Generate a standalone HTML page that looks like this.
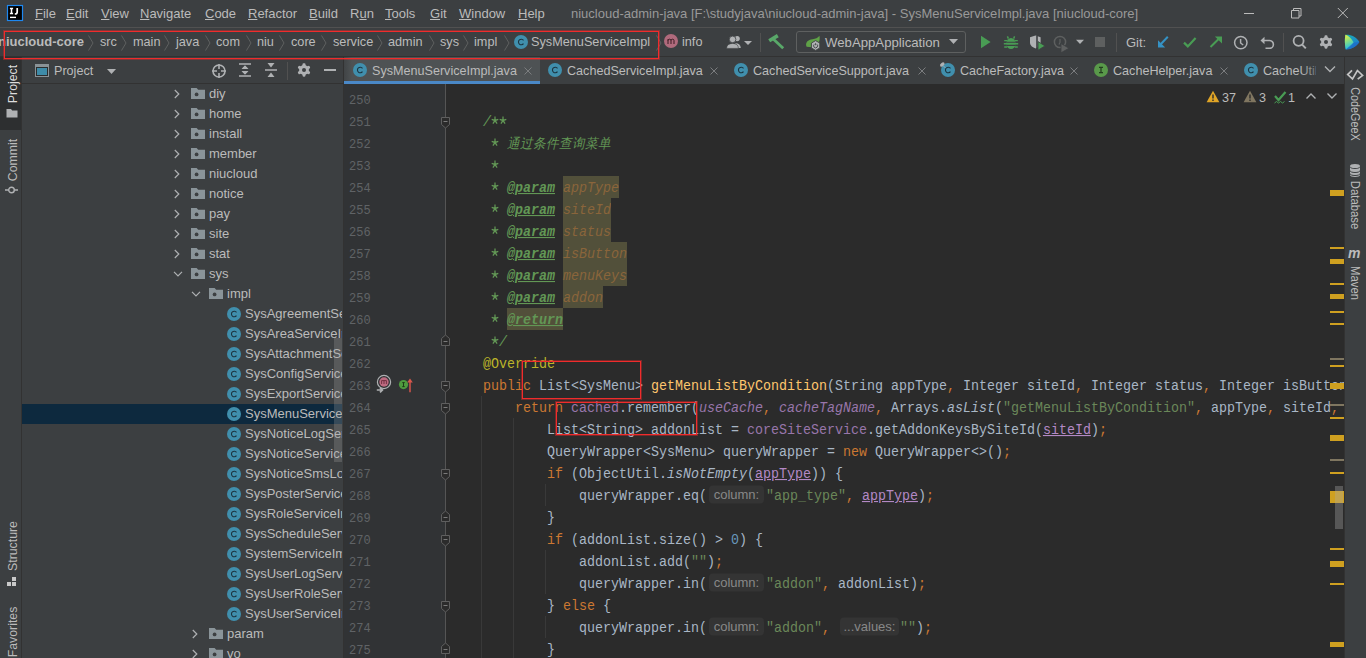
<!DOCTYPE html>
<html><head><meta charset="utf-8"><style>
html,body{margin:0;padding:0}
body{width:1366px;height:658px;overflow:hidden;position:relative;background:#3C3F41;font-family:"Liberation Sans",sans-serif}
.t{position:absolute;white-space:pre;line-height:18px;font-family:"Liberation Sans",sans-serif}
.menu{font-size:13px;color:#BBBBBB}
.menu u{text-decoration:underline;text-underline-offset:1px}
.r{position:absolute;box-sizing:border-box}
.s{position:absolute;overflow:visible}
.ln{position:absolute;left:349px;width:24px;font:12px/22px "Liberation Mono",monospace;color:#606366}
.cl{position:absolute;left:5px;white-space:pre;font:13.3333px/22px "Liberation Mono",monospace;color:#A9B7C6;transform:scaleY(1.1);transform-origin:0 5px}
.hint{transform:scaleY(0.909);transform-origin:50% 50%;display:inline-block;box-sizing:border-box;height:18px;vertical-align:0px;background:#343434;border-radius:4px;color:#888888;font:13px/19px "Liberation Sans",sans-serif;text-align:center;padding:0}
</style></head><body>
<div class="r" style="left:0px;top:0px;width:1366px;height:27px;background:#3C3F41;"></div>
<div class="r" style="left:0px;top:27px;width:1366px;height:1px;background:#515151;"></div>
<svg class="s" style="left:7px;top:5px;" width="16" height="16" viewBox="0 0 16 16"><rect x="0.5" y="0.5" width="15" height="15" fill="#000" stroke="#1E88F0" stroke-width="1.2"/><path d="M2.9 3.6h3.2M4.5 3.6v5M2.9 8.6h3.2" stroke="#fff" stroke-width="1.5" fill="none"/><path d="M10.2 3v3.9q0 2.1-2.4 2.1" stroke="#fff" stroke-width="1.7" fill="none"/><rect x="3" y="11.7" width="6" height="1.4" fill="#fff"/></svg>
<div class="t menu" style="left:35px;top:5px"><u>F</u>ile</div>
<div class="t menu" style="left:66px;top:5px"><u>E</u>dit</div>
<div class="t menu" style="left:101px;top:5px"><u>V</u>iew</div>
<div class="t menu" style="left:140px;top:5px"><u>N</u>avigate</div>
<div class="t menu" style="left:205px;top:5px"><u>C</u>ode</div>
<div class="t menu" style="left:248px;top:5px"><u>R</u>efactor</div>
<div class="t menu" style="left:309px;top:5px"><u>B</u>uild</div>
<div class="t menu" style="left:350px;top:5px">R<u>u</u>n</div>
<div class="t menu" style="left:385px;top:5px"><u>T</u>ools</div>
<div class="t menu" style="left:430px;top:5px"><u>G</u>it</div>
<div class="t menu" style="left:459px;top:5px"><u>W</u>indow</div>
<div class="t menu" style="left:518px;top:5px"><u>H</u>elp</div>
<div class="t" style="left:571px;top:5px;font-size:13px;color:#999999;font-weight:normal;">niucloud-admin-java [F:\studyjava\niucloud-admin-java] - SysMenuServiceImpl.java [niucloud-core]</div>
<svg class="s" style="left:1240px;top:6px;" width="20" height="14" viewBox="0 0 20 14"><path d="M4 7.5h10" stroke="#BBBBBB" stroke-width="1"/></svg>
<svg class="s" style="left:1288px;top:5px;" width="18" height="16" viewBox="0 0 18 16"><path d="M3.5 5.5h7.5v7.5h-7.5z M5.5 5.5v-2h7.5v7.5h-2" stroke="#BBBBBB" stroke-width="1" fill="none"/></svg>
<svg class="s" style="left:1334px;top:5px;" width="18" height="16" viewBox="0 0 18 16"><path d="M3.8 3l10 10M13.8 3l-10 10" stroke="#BBBBBB" stroke-width="1" fill="none"/></svg>
<div class="r" style="left:0px;top:28px;width:1366px;height:28px;background:#3C3F41;"></div>
<div class="r" style="left:0px;top:56px;width:1366px;height:1px;background:#323232;"></div>
<div class="t" style="left:-2px;top:33px;font-size:13px;font-weight:bold;color:#BBBBBB">niucloud-core</div>
<svg class="s" style="left:87px;top:34px;" width="8" height="18" viewBox="0 0 8 18"><path d="M1.5 1.5l4.5 7.5-4.5 7.5" stroke="#5E6060" stroke-width="1" fill="none"/></svg>
<div class="t" style="left:100px;top:33px;font-size:12.7px;color:#BBBBBB;font-weight:normal;">src</div>
<div class="t" style="left:133px;top:33px;font-size:12.7px;color:#BBBBBB;font-weight:normal;">main</div>
<div class="t" style="left:176px;top:33px;font-size:12.7px;color:#BBBBBB;font-weight:normal;">java</div>
<div class="t" style="left:216px;top:33px;font-size:12.7px;color:#BBBBBB;font-weight:normal;">com</div>
<div class="t" style="left:257px;top:33px;font-size:12.7px;color:#BBBBBB;font-weight:normal;">niu</div>
<div class="t" style="left:291px;top:33px;font-size:12.7px;color:#BBBBBB;font-weight:normal;">core</div>
<div class="t" style="left:333px;top:33px;font-size:12.7px;color:#BBBBBB;font-weight:normal;">service</div>
<div class="t" style="left:388px;top:33px;font-size:12.7px;color:#BBBBBB;font-weight:normal;">admin</div>
<div class="t" style="left:440px;top:33px;font-size:12.7px;color:#BBBBBB;font-weight:normal;">sys</div>
<div class="t" style="left:474px;top:33px;font-size:12.7px;color:#BBBBBB;font-weight:normal;">impl</div>
<svg class="s" style="left:120px;top:34px;" width="8" height="18" viewBox="0 0 8 18"><path d="M1.5 1.5l4.5 7.5-4.5 7.5" stroke="#5E6060" stroke-width="1" fill="none"/></svg>
<svg class="s" style="left:163px;top:34px;" width="8" height="18" viewBox="0 0 8 18"><path d="M1.5 1.5l4.5 7.5-4.5 7.5" stroke="#5E6060" stroke-width="1" fill="none"/></svg>
<svg class="s" style="left:204px;top:34px;" width="8" height="18" viewBox="0 0 8 18"><path d="M1.5 1.5l4.5 7.5-4.5 7.5" stroke="#5E6060" stroke-width="1" fill="none"/></svg>
<svg class="s" style="left:245px;top:34px;" width="8" height="18" viewBox="0 0 8 18"><path d="M1.5 1.5l4.5 7.5-4.5 7.5" stroke="#5E6060" stroke-width="1" fill="none"/></svg>
<svg class="s" style="left:278px;top:34px;" width="8" height="18" viewBox="0 0 8 18"><path d="M1.5 1.5l4.5 7.5-4.5 7.5" stroke="#5E6060" stroke-width="1" fill="none"/></svg>
<svg class="s" style="left:320px;top:34px;" width="8" height="18" viewBox="0 0 8 18"><path d="M1.5 1.5l4.5 7.5-4.5 7.5" stroke="#5E6060" stroke-width="1" fill="none"/></svg>
<svg class="s" style="left:376px;top:34px;" width="8" height="18" viewBox="0 0 8 18"><path d="M1.5 1.5l4.5 7.5-4.5 7.5" stroke="#5E6060" stroke-width="1" fill="none"/></svg>
<svg class="s" style="left:428px;top:34px;" width="8" height="18" viewBox="0 0 8 18"><path d="M1.5 1.5l4.5 7.5-4.5 7.5" stroke="#5E6060" stroke-width="1" fill="none"/></svg>
<svg class="s" style="left:462px;top:34px;" width="8" height="18" viewBox="0 0 8 18"><path d="M1.5 1.5l4.5 7.5-4.5 7.5" stroke="#5E6060" stroke-width="1" fill="none"/></svg>
<svg class="s" style="left:503px;top:34px;" width="8" height="18" viewBox="0 0 8 18"><path d="M1.5 1.5l4.5 7.5-4.5 7.5" stroke="#5E6060" stroke-width="1" fill="none"/></svg>
<svg class="s" style="left:655px;top:34px;" width="8" height="18" viewBox="0 0 8 18"><path d="M1.5 1.5l4.5 7.5-4.5 7.5" stroke="#5E6060" stroke-width="1" fill="none"/></svg>
<svg class="s" style="left:514px;top:35px;" width="14" height="14" viewBox="0 0 14 14"><circle cx="7" cy="7" r="7" fill="#408FAD"/><path d="M9.5 5.3A2.8 2.8 0 1 0 9.5 8.7" stroke="#1C3440" stroke-width="1.1" fill="none"/></svg>
<div class="t" style="left:531px;top:33px;font-size:12.7px;color:#BBBBBB;font-weight:normal;">SysMenuServiceImpl</div>
<svg class="s" style="left:664px;top:34px;" width="14" height="14" viewBox="0 0 14 14"><circle cx="7" cy="7" r="7" fill="#B06A7C"/><path d="M4 10V5.2M4 6.6q0-1.4 1.5-1.4t1.5 1.4V10M7 6.6q0-1.4 1.5-1.4t1.5 1.4V10" stroke="#3A1A22" stroke-width="1" fill="none"/></svg>
<div class="t" style="left:682px;top:33px;font-size:12.7px;color:#BBBBBB;font-weight:normal;">info</div>
<svg class="s" style="left:724px;top:34px;" width="30" height="16" viewBox="0 0 30 16"><circle cx="13.2" cy="4.6" r="2.6" fill="#AFB1B3"/><path d="M11 9.2Q16.6 9 16.8 14H13z" fill="#AFB1B3"/><circle cx="8.6" cy="5.4" r="3.3" fill="#AFB1B3" stroke="#3C3F41" stroke-width="0.8"/><path d="M2.6 14.4Q2.6 9.6 8.6 9.4Q14.4 9.6 14.4 14.4z" fill="#AFB1B3" stroke="#3C3F41" stroke-width="0.6"/><path d="M20 7h8l-4 4z" fill="#AFB1B3"/></svg>
<div class="r" style="left:760px;top:33px;width:1px;height:19px;background:#515151;"></div>
<svg class="s" style="left:767px;top:33px;" width="20" height="18" viewBox="0 0 20 18"><path d="M2.2 7.8L10.8 2.6" stroke="#59A869" stroke-width="3.6" fill="none"/><path d="M6.5 6.2L16.2 15.2" stroke="#59A869" stroke-width="2.8" fill="none"/></svg>
<div class="r" style="left:796px;top:31px;width:170px;height:22px;border:1px solid #5E6060;border-radius:3px;background:#3C3F41"></div>
<svg class="s" style="left:803px;top:34px;" width="20" height="18" viewBox="0 0 20 18"><path d="M3.6 12.8C1.8 8.6 5 5.6 9.6 5.2C12.6 4.9 14.6 4 16.4 1.8C17.6 6.6 15.6 11.8 9.4 13.2z" fill="#5FA247"/><path d="M12.6 6.6l4.2 2.45v4.9l-4.2 2.45-4.2-2.45v-4.9z" fill="#AFB1B3" stroke="#3C3F41" stroke-width="0.9"/><path d="M11.2 10.4a2 2 0 1 0 2.8 0M12.6 9.2v2" stroke="#3C3F41" stroke-width="0.9" fill="none"/></svg>
<div class="t" style="left:825px;top:34px;font-size:13.2px;color:#BBBBBB;font-weight:normal;">WebAppApplication</div>
<svg class="s" style="left:947px;top:37px;" width="14" height="10" viewBox="0 0 14 10"><path d="M2 2h9l-4.5 5z" fill="#AFB1B3"/></svg>
<svg class="s" style="left:979px;top:34px;" width="14" height="16" viewBox="0 0 14 16"><path d="M2 1.8l9.6 6.2-9.6 6.2z" fill="#499C54"/></svg>
<svg class="s" style="left:1003px;top:33px;" width="16" height="18" viewBox="0 0 16 18"><ellipse cx="8" cy="10.5" rx="4.6" ry="5.6" fill="#499C54"/><path d="M5.4 5.6L4.4 3.4M10.6 5.6l1-2.2M1.2 7.6h3M11.8 7.6h3M0.8 10.8h3.4M11.8 10.8h3.4M1.2 14h3M11.8 14h3" stroke="#499C54" stroke-width="1.4"/><path d="M3.5 9.2h9M3.5 12.4h9" stroke="#3C3F41" stroke-width="1.1"/></svg>
<svg class="s" style="left:1028px;top:33px;" width="18" height="18" viewBox="0 0 18 18"><path d="M2 4.2L7.5 2.6 12.6 4.2V9.5C12.6 12.8 10 14.6 7.5 15.4 5 14.6 2 12.8 2 9.5z" fill="#AFB1B3"/><path d="M9 3v13" stroke="#3C3F41" stroke-width="1.6"/><path d="M10 8.6l7 4.3-7 4.3z" fill="#499C54" stroke="#3C3F41" stroke-width="0.8"/></svg>
<svg class="s" style="left:1052px;top:33px;" width="18" height="18" viewBox="0 0 18 18"><circle cx="8" cy="9" r="5.6" fill="none" stroke="#5E6060" stroke-width="1.5"/><path d="M8 6v3.4l-1 2" stroke="#5E6060" stroke-width="1.2" fill="none"/><path d="M9 10.6l8 4.6-8 4.6z" fill="#5E6060" stroke="#3C3F41" stroke-width="0.8"/></svg>
<svg class="s" style="left:1075px;top:38px;" width="10" height="8" viewBox="0 0 10 8"><path d="M1 1.8h8l-4 4.2z" fill="#AFB1B3"/></svg>
<div class="r" style="left:1095px;top:37px;width:10px;height:10px;background:#5E6060;"></div>
<div class="r" style="left:1116px;top:33px;width:1px;height:19px;background:#515151;"></div>
<div class="t" style="left:1126px;top:34px;font-size:13px;color:#BBBBBB;font-weight:normal;">Git:</div>
<svg class="s" style="left:1156px;top:34px;" width="16" height="16" viewBox="0 0 16 16"><path d="M11.8 2.8L3.5 11.5" stroke="#3592C4" stroke-width="2" fill="none"/><path d="M2 6.2v7.2h7.2z" fill="#3592C4"/></svg>
<svg class="s" style="left:1182px;top:34px;" width="16" height="16" viewBox="0 0 16 16"><path d="M2 8.6l3.8 3.8 7.8-8.4" stroke="#499C54" stroke-width="2.2" fill="none"/></svg>
<svg class="s" style="left:1208px;top:34px;" width="16" height="16" viewBox="0 0 16 16"><path d="M2.5 13L11.6 4" stroke="#499C54" stroke-width="2" fill="none"/><path d="M14 2.5V9.6L6.9 2.5z" fill="#499C54"/></svg>
<svg class="s" style="left:1232px;top:34px;" width="18" height="18" viewBox="0 0 18 18"><circle cx="8.8" cy="8.6" r="6.2" fill="none" stroke="#AFB1B3" stroke-width="1.5"/><path d="M8.6 5v4l2.6 2" stroke="#AFB1B3" stroke-width="1.5" fill="none"/></svg>
<svg class="s" style="left:1259px;top:34px;" width="18" height="18" viewBox="0 0 18 18"><path d="M5 6.5h5.5a3.9 3.9 0 0 1 0 7.8H6.5" stroke="#AFB1B3" stroke-width="1.6" fill="none"/><path d="M1.5 6.5l4-3.8v7.6z" fill="#AFB1B3"/></svg>
<div class="r" style="left:1283px;top:33px;width:1px;height:19px;background:#515151;"></div>
<svg class="s" style="left:1290px;top:33px;" width="18" height="18" viewBox="0 0 18 18"><circle cx="8.6" cy="7.8" r="5" fill="none" stroke="#AFB1B3" stroke-width="1.8"/><path d="M12.2 11.6l3.6 3.8" stroke="#AFB1B3" stroke-width="2" fill="none"/></svg>
<svg class="s" style="left:1319px;top:35px;" width="14" height="14" viewBox="0 0 14 14"><g transform="scale(0.875)"><rect x="6.3" y="0.4" width="3.4" height="4" rx="1.2" fill="#AFB1B3" transform="rotate(0 8 8)"/><rect x="6.3" y="0.4" width="3.4" height="4" rx="1.2" fill="#AFB1B3" transform="rotate(60 8 8)"/><rect x="6.3" y="0.4" width="3.4" height="4" rx="1.2" fill="#AFB1B3" transform="rotate(120 8 8)"/><rect x="6.3" y="0.4" width="3.4" height="4" rx="1.2" fill="#AFB1B3" transform="rotate(180 8 8)"/><rect x="6.3" y="0.4" width="3.4" height="4" rx="1.2" fill="#AFB1B3" transform="rotate(240 8 8)"/><rect x="6.3" y="0.4" width="3.4" height="4" rx="1.2" fill="#AFB1B3" transform="rotate(300 8 8)"/><circle cx="8" cy="8" r="5.6" fill="#AFB1B3"/><circle cx="8" cy="8" r="2.3" fill="#3C3F41"/></g></svg>
<svg class="s" style="left:1343px;top:33px;" width="20" height="18" viewBox="0 0 20 18"><defs><linearGradient id="cg1" x1="0" y1="0" x2="0.3" y2="1"><stop offset="0" stop-color="#F2F03A"/><stop offset=".45" stop-color="#8FE07A"/><stop offset="1" stop-color="#1FC0E8"/></linearGradient><linearGradient id="cg2" x1="0" y1="0" x2="1" y2="1"><stop offset="0" stop-color="#19B5B0"/><stop offset="1" stop-color="#1E6FD6"/></linearGradient></defs><path d="M2.4 1.8C8 1.4 13 3.8 16.4 9C13 14 8 16.6 2.8 16.4C1.6 11.6 1.6 6.4 2.4 1.8z" fill="url(#cg2)"/><path d="M2.4 1.8C5.6 2.6 8.6 5.4 10.6 9.6C8.6 12.6 5.6 15 2.8 16.4C1.6 11.6 1.6 6.4 2.4 1.8z" fill="url(#cg1)"/><path d="M10.6 9.6L16.4 9C13 14 8 16.6 2.8 16.4z" fill="#1F63C8" opacity=".55"/></svg>
<div class="r" style="left:0px;top:57px;width:21px;height:601px;background:#3C3F41;"></div>
<div class="r" style="left:21px;top:57px;width:1px;height:601px;background:#323232;"></div>
<div class="r" style="left:0px;top:57px;width:21px;height:73px;background:#2D2F30;"></div>
<div class="t" style="left:12.5px;top:84px;font-size:12.3px;color:#DDDDDD;transform:translate(-50%,-50%) rotate(-90deg) scaleX(1);transform-origin:center">Project</div>
<svg class="s" style="left:6px;top:108px;" width="12" height="10" viewBox="0 0 12 10"><path d="M0.5 1h4.5l1.2 1.5H11.5V9.5H0.5z" fill="#AFB1B3"/></svg>
<div class="t" style="left:12.5px;top:160px;font-size:12.3px;color:#BBBBBB;transform:translate(-50%,-50%) rotate(-90deg) scaleX(1);transform-origin:center">Commit</div>
<svg class="s" style="left:5px;top:184px;" width="13" height="12" viewBox="0 0 13 12"><circle cx="6.5" cy="6" r="2.8" fill="none" stroke="#AFB1B3" stroke-width="1.4"/><path d="M0 6h3.7M9.3 6H13" stroke="#AFB1B3" stroke-width="1.4"/></svg>
<div class="t" style="left:13px;top:546px;font-size:12.3px;color:#BBBBBB;transform:translate(-50%,-50%) rotate(-90deg) scaleX(1);transform-origin:center">Structure</div>
<svg class="s" style="left:7px;top:577px;" width="9" height="9" viewBox="0 0 9 9"><rect x="0" y="5" width="4" height="4" fill="#C9C9C9"/><rect x="5" y="0" width="4" height="4" fill="#C9C9C9"/><rect x="5" y="5" width="4" height="4" fill="#C9C9C9"/></svg>
<div class="t" style="left:13px;top:632px;font-size:12.3px;color:#BBBBBB;transform:translate(-50%,-50%) rotate(-90deg) scaleX(1);transform-origin:center">Favorites</div>
<div class="r" style="left:22px;top:57px;width:321px;height:601px;background:#3C3F41;"></div>
<div class="r" style="left:22px;top:83px;width:321px;height:1px;background:#323232;"></div>
<div class="r" style="left:343px;top:57px;width:1px;height:601px;background:#323232;"></div>
<svg class="s" style="left:35px;top:64px;" width="14" height="13" viewBox="0 0 14 13"><rect x="0" y="0" width="14" height="13" fill="#8A9296"/><rect x="1" y="3" width="12" height="9" fill="#2B2D2E"/><rect x="2" y="4" width="10" height="7" fill="#3E8BA8"/></svg>
<div class="t" style="left:54px;top:62px;font-size:12.6px;color:#BBBBBB;font-weight:normal;">Project</div>
<svg class="s" style="left:106px;top:67px;" width="11" height="8" viewBox="0 0 11 8"><path d="M1 2h9l-4.5 5z" fill="#AFB1B3"/></svg>
<svg class="s" style="left:211px;top:63px;" width="16" height="16" viewBox="0 0 16 16"><circle cx="8" cy="8" r="6" fill="none" stroke="#AFB1B3" stroke-width="1.6"/><path d="M8 1v5M8 10v5M1 8h5M10 8h5" stroke="#AFB1B3" stroke-width="1.6"/></svg>
<svg class="s" style="left:238px;top:62px;" width="14" height="16" viewBox="0 0 14 16"><path d="M1 2h12M1 14h12" stroke="#AFB1B3" stroke-width="1.5"/><path d="M4 6.5l3-3 3 3M4 9.5l3 3 3-3" fill="#AFB1B3"/><path d="M3.5 7h7l-3.5-3.5zM3.5 9h7l-3.5 3.5z" fill="#AFB1B3"/></svg>
<svg class="s" style="left:264px;top:62px;" width="14" height="16" viewBox="0 0 14 16"><path d="M1 8h12" stroke="#AFB1B3" stroke-width="1.5"/><path d="M3.5 1h7l-3.5 4.5zM3.5 15h7l-3.5-4.5z" fill="#AFB1B3"/></svg>
<div class="r" style="left:287px;top:62px;width:1px;height:18px;background:#515151;"></div>
<svg class="s" style="left:297px;top:63px;" width="14" height="14" viewBox="0 0 14 14"><g transform="scale(0.875)"><rect x="6.3" y="0.4" width="3.4" height="4" rx="1.2" fill="#AFB1B3" transform="rotate(0 8 8)"/><rect x="6.3" y="0.4" width="3.4" height="4" rx="1.2" fill="#AFB1B3" transform="rotate(60 8 8)"/><rect x="6.3" y="0.4" width="3.4" height="4" rx="1.2" fill="#AFB1B3" transform="rotate(120 8 8)"/><rect x="6.3" y="0.4" width="3.4" height="4" rx="1.2" fill="#AFB1B3" transform="rotate(180 8 8)"/><rect x="6.3" y="0.4" width="3.4" height="4" rx="1.2" fill="#AFB1B3" transform="rotate(240 8 8)"/><rect x="6.3" y="0.4" width="3.4" height="4" rx="1.2" fill="#AFB1B3" transform="rotate(300 8 8)"/><circle cx="8" cy="8" r="5.6" fill="#AFB1B3"/><circle cx="8" cy="8" r="2.3" fill="#3C3F41"/></g></svg>
<div class="r" style="left:324px;top:69px;width:12px;height:2px;background:#AFB1B3;"></div>
<div class="r" style="left:22px;top:404px;width:320px;height:20px;background:#0D293E;"></div>
<svg class="s" style="left:173px;top:89px;" width="8" height="10" viewBox="0 0 8 10"><path d="M1.8 1l4 4-4 4" stroke="#AFB1B3" stroke-width="1.2" fill="none"/></svg>
<svg class="s" style="left:191px;top:88px;" width="14" height="12" viewBox="0 0 14 12"><path d="M0 0h5.6l1.6 1.8H14V11H0z" fill="#8A9499"/><circle cx="5.6" cy="6.4" r="1.9" fill="#3C3F41"/></svg>
<div class="t" style="left:209px;top:85px;font-size:13px;color:#BBBBBB;font-weight:normal;">diy</div>
<svg class="s" style="left:173px;top:109px;" width="8" height="10" viewBox="0 0 8 10"><path d="M1.8 1l4 4-4 4" stroke="#AFB1B3" stroke-width="1.2" fill="none"/></svg>
<svg class="s" style="left:191px;top:108px;" width="14" height="12" viewBox="0 0 14 12"><path d="M0 0h5.6l1.6 1.8H14V11H0z" fill="#8A9499"/><circle cx="5.6" cy="6.4" r="1.9" fill="#3C3F41"/></svg>
<div class="t" style="left:209px;top:105px;font-size:13px;color:#BBBBBB;font-weight:normal;">home</div>
<svg class="s" style="left:173px;top:129px;" width="8" height="10" viewBox="0 0 8 10"><path d="M1.8 1l4 4-4 4" stroke="#AFB1B3" stroke-width="1.2" fill="none"/></svg>
<svg class="s" style="left:191px;top:128px;" width="14" height="12" viewBox="0 0 14 12"><path d="M0 0h5.6l1.6 1.8H14V11H0z" fill="#8A9499"/><circle cx="5.6" cy="6.4" r="1.9" fill="#3C3F41"/></svg>
<div class="t" style="left:209px;top:125px;font-size:13px;color:#BBBBBB;font-weight:normal;">install</div>
<svg class="s" style="left:173px;top:149px;" width="8" height="10" viewBox="0 0 8 10"><path d="M1.8 1l4 4-4 4" stroke="#AFB1B3" stroke-width="1.2" fill="none"/></svg>
<svg class="s" style="left:191px;top:148px;" width="14" height="12" viewBox="0 0 14 12"><path d="M0 0h5.6l1.6 1.8H14V11H0z" fill="#8A9499"/><circle cx="5.6" cy="6.4" r="1.9" fill="#3C3F41"/></svg>
<div class="t" style="left:209px;top:145px;font-size:13px;color:#BBBBBB;font-weight:normal;">member</div>
<svg class="s" style="left:173px;top:169px;" width="8" height="10" viewBox="0 0 8 10"><path d="M1.8 1l4 4-4 4" stroke="#AFB1B3" stroke-width="1.2" fill="none"/></svg>
<svg class="s" style="left:191px;top:168px;" width="14" height="12" viewBox="0 0 14 12"><path d="M0 0h5.6l1.6 1.8H14V11H0z" fill="#8A9499"/><circle cx="5.6" cy="6.4" r="1.9" fill="#3C3F41"/></svg>
<div class="t" style="left:209px;top:165px;font-size:13px;color:#BBBBBB;font-weight:normal;">niucloud</div>
<svg class="s" style="left:173px;top:189px;" width="8" height="10" viewBox="0 0 8 10"><path d="M1.8 1l4 4-4 4" stroke="#AFB1B3" stroke-width="1.2" fill="none"/></svg>
<svg class="s" style="left:191px;top:188px;" width="14" height="12" viewBox="0 0 14 12"><path d="M0 0h5.6l1.6 1.8H14V11H0z" fill="#8A9499"/><circle cx="5.6" cy="6.4" r="1.9" fill="#3C3F41"/></svg>
<div class="t" style="left:209px;top:185px;font-size:13px;color:#BBBBBB;font-weight:normal;">notice</div>
<svg class="s" style="left:173px;top:209px;" width="8" height="10" viewBox="0 0 8 10"><path d="M1.8 1l4 4-4 4" stroke="#AFB1B3" stroke-width="1.2" fill="none"/></svg>
<svg class="s" style="left:191px;top:208px;" width="14" height="12" viewBox="0 0 14 12"><path d="M0 0h5.6l1.6 1.8H14V11H0z" fill="#8A9499"/><circle cx="5.6" cy="6.4" r="1.9" fill="#3C3F41"/></svg>
<div class="t" style="left:209px;top:205px;font-size:13px;color:#BBBBBB;font-weight:normal;">pay</div>
<svg class="s" style="left:173px;top:229px;" width="8" height="10" viewBox="0 0 8 10"><path d="M1.8 1l4 4-4 4" stroke="#AFB1B3" stroke-width="1.2" fill="none"/></svg>
<svg class="s" style="left:191px;top:228px;" width="14" height="12" viewBox="0 0 14 12"><path d="M0 0h5.6l1.6 1.8H14V11H0z" fill="#8A9499"/><circle cx="5.6" cy="6.4" r="1.9" fill="#3C3F41"/></svg>
<div class="t" style="left:209px;top:225px;font-size:13px;color:#BBBBBB;font-weight:normal;">site</div>
<svg class="s" style="left:173px;top:249px;" width="8" height="10" viewBox="0 0 8 10"><path d="M1.8 1l4 4-4 4" stroke="#AFB1B3" stroke-width="1.2" fill="none"/></svg>
<svg class="s" style="left:191px;top:248px;" width="14" height="12" viewBox="0 0 14 12"><path d="M0 0h5.6l1.6 1.8H14V11H0z" fill="#8A9499"/><circle cx="5.6" cy="6.4" r="1.9" fill="#3C3F41"/></svg>
<div class="t" style="left:209px;top:245px;font-size:13px;color:#BBBBBB;font-weight:normal;">stat</div>
<svg class="s" style="left:173px;top:270px;" width="10" height="8" viewBox="0 0 10 8"><path d="M1 1.8l4 4 4-4" stroke="#AFB1B3" stroke-width="1.2" fill="none"/></svg>
<svg class="s" style="left:191px;top:268px;" width="14" height="12" viewBox="0 0 14 12"><path d="M0 0h5.6l1.6 1.8H14V11H0z" fill="#8A9499"/><circle cx="5.6" cy="6.4" r="1.9" fill="#3C3F41"/></svg>
<div class="t" style="left:209px;top:265px;font-size:13px;color:#BBBBBB;font-weight:normal;">sys</div>
<svg class="s" style="left:191px;top:290px;" width="10" height="8" viewBox="0 0 10 8"><path d="M1 1.8l4 4 4-4" stroke="#AFB1B3" stroke-width="1.2" fill="none"/></svg>
<svg class="s" style="left:209px;top:288px;" width="14" height="12" viewBox="0 0 14 12"><path d="M0 0h5.6l1.6 1.8H14V11H0z" fill="#8A9499"/><circle cx="5.6" cy="6.4" r="1.9" fill="#3C3F41"/></svg>
<div class="t" style="left:227px;top:285px;font-size:13px;color:#BBBBBB;font-weight:normal;">impl</div>
<div style="position:absolute;left:0;top:0;width:342px;height:658px;overflow:hidden">
<svg class="s" style="left:227px;top:307px;" width="14" height="14" viewBox="0 0 14 14"><circle cx="7" cy="7" r="7" fill="#408FAD"/><path d="M9.5 5.3A2.8 2.8 0 1 0 9.5 8.7" stroke="#1C3440" stroke-width="1.1" fill="none"/></svg>
<div class="t" style="left:245px;top:305px;font-size:13px;color:#BBBBBB;font-weight:normal;">SysAgreementServiceImpl</div>
<svg class="s" style="left:227px;top:327px;" width="14" height="14" viewBox="0 0 14 14"><circle cx="7" cy="7" r="7" fill="#408FAD"/><path d="M9.5 5.3A2.8 2.8 0 1 0 9.5 8.7" stroke="#1C3440" stroke-width="1.1" fill="none"/></svg>
<div class="t" style="left:245px;top:325px;font-size:13px;color:#BBBBBB;font-weight:normal;">SysAreaServiceImpl</div>
<svg class="s" style="left:227px;top:347px;" width="14" height="14" viewBox="0 0 14 14"><circle cx="7" cy="7" r="7" fill="#408FAD"/><path d="M9.5 5.3A2.8 2.8 0 1 0 9.5 8.7" stroke="#1C3440" stroke-width="1.1" fill="none"/></svg>
<div class="t" style="left:245px;top:345px;font-size:13px;color:#BBBBBB;font-weight:normal;">SysAttachmentServiceImpl</div>
<svg class="s" style="left:227px;top:367px;" width="14" height="14" viewBox="0 0 14 14"><circle cx="7" cy="7" r="7" fill="#408FAD"/><path d="M9.5 5.3A2.8 2.8 0 1 0 9.5 8.7" stroke="#1C3440" stroke-width="1.1" fill="none"/></svg>
<div class="t" style="left:245px;top:365px;font-size:13px;color:#BBBBBB;font-weight:normal;">SysConfigServiceImpl</div>
<svg class="s" style="left:227px;top:387px;" width="14" height="14" viewBox="0 0 14 14"><circle cx="7" cy="7" r="7" fill="#408FAD"/><path d="M9.5 5.3A2.8 2.8 0 1 0 9.5 8.7" stroke="#1C3440" stroke-width="1.1" fill="none"/></svg>
<div class="t" style="left:245px;top:385px;font-size:13px;color:#BBBBBB;font-weight:normal;">SysExportServiceImpl</div>
<svg class="s" style="left:227px;top:407px;" width="14" height="14" viewBox="0 0 14 14"><circle cx="7" cy="7" r="7" fill="#408FAD"/><path d="M9.5 5.3A2.8 2.8 0 1 0 9.5 8.7" stroke="#1C3440" stroke-width="1.1" fill="none"/></svg>
<div class="t" style="left:245px;top:405px;font-size:13px;color:#BBBBBB;font-weight:normal;">SysMenuServiceImpl</div>
<svg class="s" style="left:227px;top:427px;" width="14" height="14" viewBox="0 0 14 14"><circle cx="7" cy="7" r="7" fill="#408FAD"/><path d="M9.5 5.3A2.8 2.8 0 1 0 9.5 8.7" stroke="#1C3440" stroke-width="1.1" fill="none"/></svg>
<div class="t" style="left:245px;top:425px;font-size:13px;color:#BBBBBB;font-weight:normal;">SysNoticeLogServiceImpl</div>
<svg class="s" style="left:227px;top:447px;" width="14" height="14" viewBox="0 0 14 14"><circle cx="7" cy="7" r="7" fill="#408FAD"/><path d="M9.5 5.3A2.8 2.8 0 1 0 9.5 8.7" stroke="#1C3440" stroke-width="1.1" fill="none"/></svg>
<div class="t" style="left:245px;top:445px;font-size:13px;color:#BBBBBB;font-weight:normal;">SysNoticeServiceImpl</div>
<svg class="s" style="left:227px;top:467px;" width="14" height="14" viewBox="0 0 14 14"><circle cx="7" cy="7" r="7" fill="#408FAD"/><path d="M9.5 5.3A2.8 2.8 0 1 0 9.5 8.7" stroke="#1C3440" stroke-width="1.1" fill="none"/></svg>
<div class="t" style="left:245px;top:465px;font-size:13px;color:#BBBBBB;font-weight:normal;">SysNoticeSmsLogServiceImpl</div>
<svg class="s" style="left:227px;top:487px;" width="14" height="14" viewBox="0 0 14 14"><circle cx="7" cy="7" r="7" fill="#408FAD"/><path d="M9.5 5.3A2.8 2.8 0 1 0 9.5 8.7" stroke="#1C3440" stroke-width="1.1" fill="none"/></svg>
<div class="t" style="left:245px;top:485px;font-size:13px;color:#BBBBBB;font-weight:normal;">SysPosterServiceImpl</div>
<svg class="s" style="left:227px;top:507px;" width="14" height="14" viewBox="0 0 14 14"><circle cx="7" cy="7" r="7" fill="#408FAD"/><path d="M9.5 5.3A2.8 2.8 0 1 0 9.5 8.7" stroke="#1C3440" stroke-width="1.1" fill="none"/></svg>
<div class="t" style="left:245px;top:505px;font-size:13px;color:#BBBBBB;font-weight:normal;">SysRoleServiceImpl</div>
<svg class="s" style="left:227px;top:527px;" width="14" height="14" viewBox="0 0 14 14"><circle cx="7" cy="7" r="7" fill="#408FAD"/><path d="M9.5 5.3A2.8 2.8 0 1 0 9.5 8.7" stroke="#1C3440" stroke-width="1.1" fill="none"/></svg>
<div class="t" style="left:245px;top:525px;font-size:13px;color:#BBBBBB;font-weight:normal;">SysScheduleServiceImpl</div>
<svg class="s" style="left:227px;top:547px;" width="14" height="14" viewBox="0 0 14 14"><circle cx="7" cy="7" r="7" fill="#408FAD"/><path d="M9.5 5.3A2.8 2.8 0 1 0 9.5 8.7" stroke="#1C3440" stroke-width="1.1" fill="none"/></svg>
<div class="t" style="left:245px;top:545px;font-size:13px;color:#BBBBBB;font-weight:normal;">SystemServiceImpl</div>
<svg class="s" style="left:227px;top:567px;" width="14" height="14" viewBox="0 0 14 14"><circle cx="7" cy="7" r="7" fill="#408FAD"/><path d="M9.5 5.3A2.8 2.8 0 1 0 9.5 8.7" stroke="#1C3440" stroke-width="1.1" fill="none"/></svg>
<div class="t" style="left:245px;top:565px;font-size:13px;color:#BBBBBB;font-weight:normal;">SysUserLogServiceImpl</div>
<svg class="s" style="left:227px;top:587px;" width="14" height="14" viewBox="0 0 14 14"><circle cx="7" cy="7" r="7" fill="#408FAD"/><path d="M9.5 5.3A2.8 2.8 0 1 0 9.5 8.7" stroke="#1C3440" stroke-width="1.1" fill="none"/></svg>
<div class="t" style="left:245px;top:585px;font-size:13px;color:#BBBBBB;font-weight:normal;">SysUserRoleServiceImpl</div>
<svg class="s" style="left:227px;top:607px;" width="14" height="14" viewBox="0 0 14 14"><circle cx="7" cy="7" r="7" fill="#408FAD"/><path d="M9.5 5.3A2.8 2.8 0 1 0 9.5 8.7" stroke="#1C3440" stroke-width="1.1" fill="none"/></svg>
<div class="t" style="left:245px;top:605px;font-size:13px;color:#BBBBBB;font-weight:normal;">SysUserServiceImpl</div>
</div>
<svg class="s" style="left:191px;top:629px;" width="8" height="10" viewBox="0 0 8 10"><path d="M1.8 1l4 4-4 4" stroke="#AFB1B3" stroke-width="1.2" fill="none"/></svg>
<svg class="s" style="left:209px;top:628px;" width="14" height="12" viewBox="0 0 14 12"><path d="M0 0h5.6l1.6 1.8H14V11H0z" fill="#8A9499"/><circle cx="5.6" cy="6.4" r="1.9" fill="#3C3F41"/></svg>
<div class="t" style="left:227px;top:625px;font-size:13px;color:#BBBBBB;font-weight:normal;">param</div>
<svg class="s" style="left:191px;top:649px;" width="8" height="10" viewBox="0 0 8 10"><path d="M1.8 1l4 4-4 4" stroke="#AFB1B3" stroke-width="1.2" fill="none"/></svg>
<svg class="s" style="left:209px;top:648px;" width="14" height="12" viewBox="0 0 14 12"><path d="M0 0h5.6l1.6 1.8H14V11H0z" fill="#8A9499"/><circle cx="5.6" cy="6.4" r="1.9" fill="#3C3F41"/></svg>
<div class="t" style="left:227px;top:645px;font-size:13px;color:#BBBBBB;font-weight:normal;">vo</div>
<div class="r" style="left:334px;top:338px;width:8px;height:124px;background:rgba(160,160,160,0.28);"></div>
<div class="r" style="left:344px;top:57px;width:1000px;height:27px;background:#3C3F41;"></div>
<div class="r" style="left:344px;top:57px;width:196px;height:27px;background:#4E5254;"></div>
<div class="r" style="left:344px;top:81px;width:196px;height:3px;background:#4A88C7;"></div>
<div class="r" style="left:344px;top:57px;width:8px;height:24px;background:linear-gradient(90deg,rgba(40,42,44,0.35),rgba(40,42,44,0));"></div>
<div style="position:absolute;left:344px;top:57px;width:972px;height:27px;overflow:hidden">
<svg class="s" style="left:9px;top:6px;" width="14" height="14" viewBox="0 0 14 14"><circle cx="7" cy="7" r="7" fill="#408FAD"/><path d="M9.5 5.3A2.8 2.8 0 1 0 9.5 8.7" stroke="#1C3440" stroke-width="1.1" fill="none"/></svg>
<div class="t" style="left:28px;top:5px;font-size:12.6px;color:#BBBBBB;font-weight:normal;">SysMenuServiceImpl.java</div>
<svg class="s" style="left:179px;top:9px;" width="10" height="10" viewBox="0 0 10 10"><path d="M1.5 1.5l7 7M8.5 1.5l-7 7" stroke="#7B7D7F" stroke-width="1"/></svg>
<svg class="s" style="left:204px;top:6px;" width="14" height="14" viewBox="0 0 14 14"><circle cx="7" cy="7" r="7" fill="#408FAD"/><path d="M9.5 5.3A2.8 2.8 0 1 0 9.5 8.7" stroke="#1C3440" stroke-width="1.1" fill="none"/></svg>
<div class="t" style="left:223px;top:5px;font-size:12.6px;color:#BBBBBB;font-weight:normal;">CachedServiceImpl.java</div>
<svg class="s" style="left:365px;top:9px;" width="10" height="10" viewBox="0 0 10 10"><path d="M1.5 1.5l7 7M8.5 1.5l-7 7" stroke="#7B7D7F" stroke-width="1"/></svg>
<svg class="s" style="left:390px;top:6px;" width="14" height="14" viewBox="0 0 14 14"><circle cx="7" cy="7" r="7" fill="#408FAD"/><path d="M9.5 5.3A2.8 2.8 0 1 0 9.5 8.7" stroke="#1C3440" stroke-width="1.1" fill="none"/></svg>
<div class="t" style="left:409px;top:5px;font-size:12.6px;color:#BBBBBB;font-weight:normal;">CachedServiceSupport.java</div>
<svg class="s" style="left:573px;top:9px;" width="10" height="10" viewBox="0 0 10 10"><path d="M1.5 1.5l7 7M8.5 1.5l-7 7" stroke="#7B7D7F" stroke-width="1"/></svg>
<svg class="s" style="left:597px;top:6px;" width="14" height="14" viewBox="0 0 14 14"><circle cx="7" cy="7" r="7" fill="#408FAD"/><path d="M9.5 5.3A2.8 2.8 0 1 0 9.5 8.7" stroke="#1C3440" stroke-width="1.1" fill="none"/></svg>
<div class="t" style="left:616px;top:5px;font-size:12.6px;color:#BBBBBB;font-weight:normal;">CacheFactory.java</div>
<svg class="s" style="left:725px;top:9px;" width="10" height="10" viewBox="0 0 10 10"><path d="M1.5 1.5l7 7M8.5 1.5l-7 7" stroke="#7B7D7F" stroke-width="1"/></svg>
<svg class="s" style="left:750px;top:6px;" width="14" height="14" viewBox="0 0 14 14"><circle cx="7" cy="7" r="7" fill="#59994A"/><path d="M5 4.4h4M5 9.6h4M7 4.4v5.2" stroke="#233D1E" stroke-width="1.2" fill="none"/></svg>
<div class="t" style="left:769px;top:5px;font-size:12.6px;color:#BBBBBB;font-weight:normal;">CacheHelper.java</div>
<svg class="s" style="left:875px;top:9px;" width="10" height="10" viewBox="0 0 10 10"><path d="M1.5 1.5l7 7M8.5 1.5l-7 7" stroke="#7B7D7F" stroke-width="1"/></svg>
<svg class="s" style="left:900px;top:6px;" width="14" height="14" viewBox="0 0 14 14"><circle cx="7" cy="7" r="7" fill="#408FAD"/><path d="M9.5 5.3A2.8 2.8 0 1 0 9.5 8.7" stroke="#1C3440" stroke-width="1.1" fill="none"/></svg>
<div class="t" style="left:919px;top:5px;font-size:12.6px;color:#BBBBBB;font-weight:normal;">CacheUtil.java</div>
</div>
<div class="r" style="left:1300px;top:57px;width:16px;height:27px;background:linear-gradient(90deg,rgba(60,63,65,0),rgba(60,63,65,0.6))"></div>
<svg class="s" style="left:1324px;top:64px;" width="12" height="10" viewBox="0 0 12 10"><path d="M1 2.5l5 5 5-5" stroke="#AFB1B3" stroke-width="1.4" fill="none"/></svg>
<svg class="s" style="left:938px;top:60px;" width="10" height="10" viewBox="0 0 10 10"><ellipse cx="4.3" cy="4.5" rx="2.6" ry="1.7" transform="rotate(-40 4.3 4.5)" fill="#AFB1B3"/><path d="M5.5 6l2 2" stroke="#AFB1B3" stroke-width="0.8"/></svg>
<div class="r" style="left:1344px;top:57px;width:22px;height:601px;background:#3C3F41;"></div>
<div class="r" style="left:1344px;top:57px;width:1px;height:601px;background:#323232;"></div>
<svg class="s" style="left:1344px;top:64px;" width="22" height="22" viewBox="0 0 22 22"><path d="M8 6.4L3.7 10.6 8.5 15 13.4 6.5 18.6 11.4 13.7 15.2" stroke="#C4C4C4" stroke-width="1.7" fill="none" stroke-linejoin="miter"/></svg>
<div class="t" style="left:1355px;top:114px;font-size:12.3px;color:#BBBBBB;transform:translate(-50%,-50%) rotate(90deg) scaleX(0.88);transform-origin:center">CodeGeeX</div>
<svg class="s" style="left:1349px;top:163px;" width="12" height="14" viewBox="0 0 12 14"><ellipse cx="6" cy="3" rx="5" ry="2" fill="#AFB1B3"/><path d="M1 4v8c0 1.3 2.2 2 5 2s5-.7 5-2V4c0 1.3-2.2 2-5 2s-5-.7-5-2z" fill="#AFB1B3"/><path d="M1 7.5c0 1.3 2.2 2 5 2s5-.7 5-2M1 10.5c0 1.3 2.2 2 5 2s5-.7 5-2" stroke="#3C3F41" fill="none"/></svg>
<div class="t" style="left:1355px;top:204.5px;font-size:12.3px;color:#BBBBBB;transform:translate(-50%,-50%) rotate(90deg) scaleX(0.92);transform-origin:center">Database</div>
<div class="t" style="left:1348px;top:244px;font-size:14px;font-style:italic;font-weight:bold;color:#BBBBBB">m</div>
<div class="t" style="left:1355px;top:283px;font-size:12.3px;color:#BBBBBB;transform:translate(-50%,-50%) rotate(90deg) scaleX(0.92);transform-origin:center">Maven</div>
<div class="r" style="left:344px;top:84px;width:1000px;height:574px;background:#2B2B2B;"></div>
<div class="r" style="left:344px;top:84px;width:101px;height:574px;background:#313335;"></div>
<div class="r" style="left:445px;top:84px;width:1px;height:574px;background:#555555;"></div>
<div class="ln" style="top:90px">250</div>
<div class="ln" style="top:112px">251</div>
<div class="ln" style="top:134px">252</div>
<div class="ln" style="top:156px">253</div>
<div class="ln" style="top:178px">254</div>
<div class="ln" style="top:200px">255</div>
<div class="ln" style="top:222px">256</div>
<div class="ln" style="top:244px">257</div>
<div class="ln" style="top:266px">258</div>
<div class="ln" style="top:288px">259</div>
<div class="ln" style="top:310px">260</div>
<div class="ln" style="top:332px">261</div>
<div class="ln" style="top:354px">262</div>
<div class="ln" style="top:376px">263</div>
<div class="ln" style="top:398px">264</div>
<div class="ln" style="top:420px">265</div>
<div class="ln" style="top:442px">266</div>
<div class="ln" style="top:464px">267</div>
<div class="ln" style="top:486px">268</div>
<div class="ln" style="top:508px">269</div>
<div class="ln" style="top:530px">270</div>
<div class="ln" style="top:552px">271</div>
<div class="ln" style="top:574px">272</div>
<div class="ln" style="top:596px">273</div>
<div class="ln" style="top:618px">274</div>
<div class="ln" style="top:640px">275</div>
<div class="r" style="left:563px;top:176px;width:56px;height:22px;background:#52503A;"></div>
<div class="r" style="left:563px;top:198px;width:48px;height:22px;background:#52503A;"></div>
<div class="r" style="left:563px;top:220px;width:48px;height:22px;background:#52503A;"></div>
<div class="r" style="left:563px;top:242px;width:64px;height:22px;background:#52503A;"></div>
<div class="r" style="left:563px;top:264px;width:64px;height:22px;background:#52503A;"></div>
<div class="r" style="left:563px;top:286px;width:40px;height:22px;background:#52503A;"></div>
<div class="r" style="left:507px;top:308px;width:56px;height:22px;background:#52503A;"></div>
<div class="r" style="left:481px;top:396px;width:1px;height:262px;background:#393939;"></div>
<div class="r" style="left:513px;top:418px;width:1px;height:240px;background:#393939;"></div>
<div class="r" style="left:545px;top:484px;width:1px;height:22px;background:#393939;"></div>
<div class="r" style="left:545px;top:550px;width:1px;height:44px;background:#393939;"></div>
<div class="r" style="left:545px;top:616px;width:1px;height:22px;background:#393939;"></div>
<div style="position:absolute;left:446px;top:84px;width:898px;height:574px;overflow:hidden">
<div class="cl" style="top:5px"></div>
<div class="cl" style="top:27px"><span style="color:#629755;font-style:italic">    /</span><svg width="8" height="22" viewBox="0 0 8 22" style="vertical-align:top"><path d="M4 9.1V5.5M4 9.1L7.3 8M4 9.1L0.7 8M4 9.1L6.1 12M4 9.1L1.9 12" stroke="#629755" stroke-width="1.25" fill="none"/></svg><svg width="8" height="22" viewBox="0 0 8 22" style="vertical-align:top"><path d="M4 9.1V5.5M4 9.1L7.3 8M4 9.1L0.7 8M4 9.1L6.1 12M4 9.1L1.9 12" stroke="#629755" stroke-width="1.25" fill="none"/></svg></div>
<div class="cl" style="top:49px"><span style="color:#629755;font-style:italic">     </span><svg width="8" height="22" viewBox="0 0 8 22" style="vertical-align:top"><path d="M4 9.1V5.5M4 9.1L7.3 8M4 9.1L0.7 8M4 9.1L6.1 12M4 9.1L1.9 12" stroke="#629755" stroke-width="1.25" fill="none"/></svg><span style="color:#629755;font-style:italic"> </span><span style="color:#629755;font-style:italic;font-size:12.5px">通过条件查询菜单</span></div>
<div class="cl" style="top:71px"><span style="color:#629755;font-style:italic">     </span><svg width="8" height="22" viewBox="0 0 8 22" style="vertical-align:top"><path d="M4 9.1V5.5M4 9.1L7.3 8M4 9.1L0.7 8M4 9.1L6.1 12M4 9.1L1.9 12" stroke="#629755" stroke-width="1.25" fill="none"/></svg></div>
<div class="cl" style="top:93px"><span style="color:#629755;font-style:italic">     </span><svg width="8" height="22" viewBox="0 0 8 22" style="vertical-align:top"><path d="M4 9.1V5.5M4 9.1L7.3 8M4 9.1L0.7 8M4 9.1L6.1 12M4 9.1L1.9 12" stroke="#629755" stroke-width="1.25" fill="none"/></svg><span style="color:#629755;font-style:italic"> </span><span style="color:#629755;font-style:italic;font-weight:bold;text-decoration:underline">@param</span><span style=""> </span><span style="color:#8A653B;font-style:italic">appType</span></div>
<div class="cl" style="top:115px"><span style="color:#629755;font-style:italic">     </span><svg width="8" height="22" viewBox="0 0 8 22" style="vertical-align:top"><path d="M4 9.1V5.5M4 9.1L7.3 8M4 9.1L0.7 8M4 9.1L6.1 12M4 9.1L1.9 12" stroke="#629755" stroke-width="1.25" fill="none"/></svg><span style="color:#629755;font-style:italic"> </span><span style="color:#629755;font-style:italic;font-weight:bold;text-decoration:underline">@param</span><span style=""> </span><span style="color:#8A653B;font-style:italic">siteId</span></div>
<div class="cl" style="top:137px"><span style="color:#629755;font-style:italic">     </span><svg width="8" height="22" viewBox="0 0 8 22" style="vertical-align:top"><path d="M4 9.1V5.5M4 9.1L7.3 8M4 9.1L0.7 8M4 9.1L6.1 12M4 9.1L1.9 12" stroke="#629755" stroke-width="1.25" fill="none"/></svg><span style="color:#629755;font-style:italic"> </span><span style="color:#629755;font-style:italic;font-weight:bold;text-decoration:underline">@param</span><span style=""> </span><span style="color:#8A653B;font-style:italic">status</span></div>
<div class="cl" style="top:159px"><span style="color:#629755;font-style:italic">     </span><svg width="8" height="22" viewBox="0 0 8 22" style="vertical-align:top"><path d="M4 9.1V5.5M4 9.1L7.3 8M4 9.1L0.7 8M4 9.1L6.1 12M4 9.1L1.9 12" stroke="#629755" stroke-width="1.25" fill="none"/></svg><span style="color:#629755;font-style:italic"> </span><span style="color:#629755;font-style:italic;font-weight:bold;text-decoration:underline">@param</span><span style=""> </span><span style="color:#8A653B;font-style:italic">isButton</span></div>
<div class="cl" style="top:181px"><span style="color:#629755;font-style:italic">     </span><svg width="8" height="22" viewBox="0 0 8 22" style="vertical-align:top"><path d="M4 9.1V5.5M4 9.1L7.3 8M4 9.1L0.7 8M4 9.1L6.1 12M4 9.1L1.9 12" stroke="#629755" stroke-width="1.25" fill="none"/></svg><span style="color:#629755;font-style:italic"> </span><span style="color:#629755;font-style:italic;font-weight:bold;text-decoration:underline">@param</span><span style=""> </span><span style="color:#8A653B;font-style:italic">menuKeys</span></div>
<div class="cl" style="top:203px"><span style="color:#629755;font-style:italic">     </span><svg width="8" height="22" viewBox="0 0 8 22" style="vertical-align:top"><path d="M4 9.1V5.5M4 9.1L7.3 8M4 9.1L0.7 8M4 9.1L6.1 12M4 9.1L1.9 12" stroke="#629755" stroke-width="1.25" fill="none"/></svg><span style="color:#629755;font-style:italic"> </span><span style="color:#629755;font-style:italic;font-weight:bold;text-decoration:underline">@param</span><span style=""> </span><span style="color:#8A653B;font-style:italic">addon</span></div>
<div class="cl" style="top:225px"><span style="color:#629755;font-style:italic">     </span><svg width="8" height="22" viewBox="0 0 8 22" style="vertical-align:top"><path d="M4 9.1V5.5M4 9.1L7.3 8M4 9.1L0.7 8M4 9.1L6.1 12M4 9.1L1.9 12" stroke="#629755" stroke-width="1.25" fill="none"/></svg><span style="color:#629755;font-style:italic"> </span><span style="color:#629755;font-style:italic;font-weight:bold;text-decoration:underline">@return</span></div>
<div class="cl" style="top:247px"><span style="color:#629755;font-style:italic">     </span><svg width="8" height="22" viewBox="0 0 8 22" style="vertical-align:top"><path d="M4 9.1V5.5M4 9.1L7.3 8M4 9.1L0.7 8M4 9.1L6.1 12M4 9.1L1.9 12" stroke="#629755" stroke-width="1.25" fill="none"/></svg><span style="color:#629755;font-style:italic">/</span></div>
<div class="cl" style="top:269px"><span style="color:#BBB529">    @Override</span></div>
<div class="cl" style="top:291px"><span style="">    </span><span style="color:#CC7832">public</span><span style=""> List&lt;SysMenu&gt; </span><span style="color:#FFC66D">getMenuListByCondition</span><span style="">(String appType</span><span style="color:#CC7832">,</span><span style=""> Integer siteId</span><span style="color:#CC7832">,</span><span style=""> Integer status</span><span style="color:#CC7832">,</span><span style=""> Integer isButton</span><span style="color:#CC7832">,</span><span style=""> String menuKeys</span></div>
<div class="cl" style="top:313px"><span style="">        </span><span style="color:#CC7832">return</span><span style=""> </span><span style="color:#9876AA">cached</span><span style="">.remember(</span><span style="color:#9876AA;font-style:italic">useCache</span><span style="color:#CC7832">,</span><span style=""> </span><span style="color:#9876AA;font-style:italic">cacheTagName</span><span style="color:#CC7832">,</span><span style=""> Arrays.</span><span style="font-style:italic">asList</span><span style="">(</span><span style="color:#6A8759">&quot;getMenuListByCondition&quot;</span><span style="color:#CC7832">,</span><span style=""> appType</span><span style="color:#CC7832">,</span><span style=""> siteId</span><span style="color:#CC7832">,</span><span style=""> status</span></div>
<div class="cl" style="top:335px"><span style="">            List&lt;String&gt; addonList = </span><span style="color:#9876AA">coreSiteService</span><span style="">.getAddonKeysBySiteId(</span><span style="color:#B389C5;text-decoration:underline;text-decoration-color:#B389C5">siteId</span><span style="">)</span><span style="color:#CC7832">;</span></div>
<div class="cl" style="top:357px"><span style="">            QueryWrapper&lt;SysMenu&gt; queryWrapper = </span><span style="color:#CC7832">new</span><span style=""> QueryWrapper&lt;&gt;()</span><span style="color:#CC7832">;</span></div>
<div class="cl" style="top:379px"><span style="">            </span><span style="color:#CC7832">if</span><span style=""> (ObjectUtil.</span><span style="font-style:italic">isNotEmpty</span><span style="">(</span><span style="color:#B389C5;text-decoration:underline;text-decoration-color:#B389C5">appType</span><span style="">)) {</span></div>
<div class="cl" style="top:401px"><span style="">                queryWrapper.eq(</span><span class="hint" style="margin-left:2px;margin-right:2px;width:55px">column:</span><span style="color:#6A8759">&quot;app_type&quot;</span><span style="color:#CC7832">,</span><span style=""> </span><span style="color:#B389C5;text-decoration:underline;text-decoration-color:#B389C5">appType</span><span style="">)</span><span style="color:#CC7832">;</span></div>
<div class="cl" style="top:423px"><span style="">            }</span></div>
<div class="cl" style="top:445px"><span style="">            </span><span style="color:#CC7832">if</span><span style=""> (addonList.size() &gt; </span><span style="color:#6897BB">0</span><span style="">) {</span></div>
<div class="cl" style="top:467px"><span style="">                addonList.add(</span><span style="color:#6A8759">&quot;&quot;</span><span style="">)</span><span style="color:#CC7832">;</span></div>
<div class="cl" style="top:489px"><span style="">                queryWrapper.in(</span><span class="hint" style="margin-left:2px;margin-right:2px;width:55px">column:</span><span style="color:#6A8759">&quot;addon&quot;</span><span style="color:#CC7832">,</span><span style=""> addonList)</span><span style="color:#CC7832">;</span></div>
<div class="cl" style="top:511px"><span style="">            } </span><span style="color:#CC7832">else</span><span style=""> {</span></div>
<div class="cl" style="top:533px"><span style="">                queryWrapper.in(</span><span class="hint" style="margin-left:2px;margin-right:2px;width:55px">column:</span><span style="color:#6A8759">&quot;addon&quot;</span><span style="color:#CC7832">,</span><span style=""> </span><span class="hint" style="margin-left:2px;margin-right:1px;width:59px">...values:</span><span style="color:#6A8759">&quot;&quot;</span><span style="">)</span><span style="color:#CC7832">;</span></div>
<div class="cl" style="top:555px"><span style="">            }</span></div>
</div>
<svg class="s" style="left:440px;top:116px;" width="11" height="14" viewBox="0 0 11 14"><path d="M1.5 1.5h8v7l-4 3.5-4-3.5z" fill="#2B2B2B" stroke="#5F5F5F" stroke-width="1"/><path d="M3.5 5.5h4" stroke="#7A7A7A" stroke-width="1"/></svg>
<svg class="s" style="left:440px;top:380px;" width="11" height="14" viewBox="0 0 11 14"><path d="M1.5 1.5h8v7l-4 3.5-4-3.5z" fill="#2B2B2B" stroke="#5F5F5F" stroke-width="1"/><path d="M3.5 5.5h4" stroke="#7A7A7A" stroke-width="1"/></svg>
<svg class="s" style="left:440px;top:402px;" width="11" height="14" viewBox="0 0 11 14"><path d="M1.5 1.5h8v7l-4 3.5-4-3.5z" fill="#2B2B2B" stroke="#5F5F5F" stroke-width="1"/><path d="M3.5 5.5h4" stroke="#7A7A7A" stroke-width="1"/></svg>
<svg class="s" style="left:440px;top:468px;" width="11" height="14" viewBox="0 0 11 14"><path d="M1.5 1.5h8v7l-4 3.5-4-3.5z" fill="#2B2B2B" stroke="#5F5F5F" stroke-width="1"/><path d="M3.5 5.5h4" stroke="#7A7A7A" stroke-width="1"/></svg>
<svg class="s" style="left:440px;top:534px;" width="11" height="14" viewBox="0 0 11 14"><path d="M1.5 1.5h8v7l-4 3.5-4-3.5z" fill="#2B2B2B" stroke="#5F5F5F" stroke-width="1"/><path d="M3.5 5.5h4" stroke="#7A7A7A" stroke-width="1"/></svg>
<svg class="s" style="left:440px;top:600px;" width="11" height="14" viewBox="0 0 11 14"><path d="M1.5 1.5h8v7l-4 3.5-4-3.5z" fill="#2B2B2B" stroke="#5F5F5F" stroke-width="1"/><path d="M3.5 5.5h4" stroke="#7A7A7A" stroke-width="1"/></svg>
<svg class="s" style="left:440px;top:333px;" width="11" height="14" viewBox="0 0 11 14"><path d="M1.5 12.5h8v-7l-4-3.5-4 3.5z" fill="#2B2B2B" stroke="#5F5F5F" stroke-width="1"/><path d="M3.5 8.5h4" stroke="#7A7A7A" stroke-width="1"/></svg>
<svg class="s" style="left:440px;top:509px;" width="11" height="14" viewBox="0 0 11 14"><path d="M1.5 12.5h8v-7l-4-3.5-4 3.5z" fill="#2B2B2B" stroke="#5F5F5F" stroke-width="1"/><path d="M3.5 8.5h4" stroke="#7A7A7A" stroke-width="1"/></svg>
<svg class="s" style="left:440px;top:641px;" width="11" height="14" viewBox="0 0 11 14"><path d="M1.5 12.5h8v-7l-4-3.5-4 3.5z" fill="#2B2B2B" stroke="#5F5F5F" stroke-width="1"/><path d="M3.5 8.5h4" stroke="#7A7A7A" stroke-width="1"/></svg>
<svg class="s" style="left:375px;top:373px;" width="18" height="20" viewBox="0 0 18 20"><circle cx="9" cy="9" r="6.6" fill="none" stroke="#AFB1B3" stroke-width="1.2"/><circle cx="9" cy="9" r="4.7" fill="#BD6A80"/><path d="M6.6 11V7.6h4.8V11M9 7.6V11" stroke="#6B2B3C" stroke-width="0.9" fill="none"/><path d="M1.8 17h5.4M5 14.6l2.4 2.4-2.4 2.4" stroke="#AFB1B3" stroke-width="1.7" fill="none"/></svg>
<svg class="s" style="left:397px;top:376px;" width="18" height="18" viewBox="0 0 18 18"><circle cx="6.5" cy="8.6" r="4.6" fill="#4E9A3E"/><path d="M5.3 6.6h2.4M5.3 10.6h2.4M6.5 6.6v4" stroke="#1E3A18" stroke-width="1" fill="none"/><path d="M13 16.2V5" stroke="#C9524A" stroke-width="1.6"/><path d="M10.2 6.4L13 2.4l2.8 4z" fill="#D7574C"/></svg>
<svg class="s" style="left:1206px;top:90px;" width="14" height="13" viewBox="0 0 14 13"><path d="M7 0.8l6.4 11.4H0.6z" fill="#E0A526"/><path d="M7 4.5v4M7 9.6v1.4" stroke="#2B2B2B" stroke-width="1.4"/></svg>
<div class="t" style="left:1222px;top:89px;font-size:12.6px;color:#BBBBBB;font-weight:normal;">37</div>
<svg class="s" style="left:1243px;top:90px;" width="14" height="13" viewBox="0 0 14 13"><path d="M7 0.8l6.4 11.4H0.6z" fill="#807660"/><path d="M7 4.5v4M7 9.6v1.4" stroke="#2B2B2B" stroke-width="1.4"/></svg>
<div class="t" style="left:1259px;top:89px;font-size:12.6px;color:#BBBBBB;font-weight:normal;">3</div>
<svg class="s" style="left:1273px;top:90px;" width="14" height="15" viewBox="0 0 14 15"><path d="M2 6l3.5 4 7-8" stroke="#499C54" stroke-width="2.2" fill="none"/><path d="M1.5 13l2-1.5 2 1.5 2-1.5 2 1.5 2-1.5" stroke="#499C54" stroke-width="1" fill="none"/></svg>
<div class="t" style="left:1288px;top:89px;font-size:12.6px;color:#BBBBBB;font-weight:normal;">1</div>
<svg class="s" style="left:1305px;top:92px;" width="12" height="8" viewBox="0 0 12 8"><path d="M1.5 6.5l4.5-4.5 4.5 4.5" stroke="#AFB1B3" stroke-width="1.4" fill="none"/></svg>
<svg class="s" style="left:1326px;top:92px;" width="12" height="8" viewBox="0 0 12 8"><path d="M1.5 1.5l4.5 4.5 4.5-4.5" stroke="#AFB1B3" stroke-width="1.4" fill="none"/></svg>
<div class="r" style="left:1330px;top:190px;width:14px;height:6px;background:#CFA020;"></div>
<div class="r" style="left:1330px;top:247px;width:14px;height:2px;background:#CFA020;"></div>
<div class="r" style="left:1330px;top:259px;width:14px;height:5px;background:#CFA020;"></div>
<div class="r" style="left:1330px;top:283px;width:14px;height:2px;background:#CFA020;"></div>
<div class="r" style="left:1330px;top:294px;width:14px;height:5px;background:#CFA020;"></div>
<div class="r" style="left:1330px;top:311px;width:14px;height:2px;background:#CFA020;"></div>
<div class="r" style="left:1330px;top:323px;width:14px;height:2px;background:#CFA020;"></div>
<div class="r" style="left:1330px;top:358px;width:14px;height:2px;background:#7F7660;"></div>
<div class="r" style="left:1330px;top:365px;width:14px;height:2px;background:#CFA020;"></div>
<div class="r" style="left:1330px;top:383px;width:14px;height:6px;background:#CFA020;"></div>
<div class="r" style="left:1330px;top:404px;width:14px;height:2px;background:#7F7660;"></div>
<div class="r" style="left:1330px;top:417px;width:14px;height:2px;background:#CFA020;"></div>
<div class="r" style="left:1330px;top:435px;width:14px;height:6px;background:#CFA020;"></div>
<div class="r" style="left:1330px;top:459px;width:14px;height:2px;background:#7F7660;"></div>
<div class="r" style="left:1330px;top:472px;width:14px;height:2px;background:#CFA020;"></div>
<div class="r" style="left:1330px;top:491px;width:14px;height:12px;background:#CFA020;"></div>
<div class="r" style="left:1330px;top:548px;width:14px;height:2px;background:#CFA020;"></div>
<div class="r" style="left:1330px;top:561px;width:14px;height:6px;background:#CFA020;"></div>
<div class="r" style="left:1330px;top:583px;width:14px;height:2px;background:#CFA020;"></div>
<div class="r" style="left:1330px;top:642px;width:14px;height:5px;background:#CFA020;"></div>
<div class="r" style="left:1335px;top:486px;width:8px;height:43px;background:rgba(170,170,170,0.35);"></div>
<div class="r" style="left:4px;top:31px;width:655px;height:28px;border:1px solid #F02C2C;box-shadow:0 0 0 1px rgba(235,40,40,0.4);background:none"></div>
<div class="r" style="left:522px;top:361px;width:119px;height:38px;border:1px solid #F02C2C;box-shadow:0 0 0 1px rgba(235,40,40,0.4);background:none"></div>
<div class="r" style="left:556px;top:402px;width:141px;height:33px;border:1px solid #F02C2C;box-shadow:0 0 0 1px rgba(235,40,40,0.4);background:none"></div>
</body></html>
